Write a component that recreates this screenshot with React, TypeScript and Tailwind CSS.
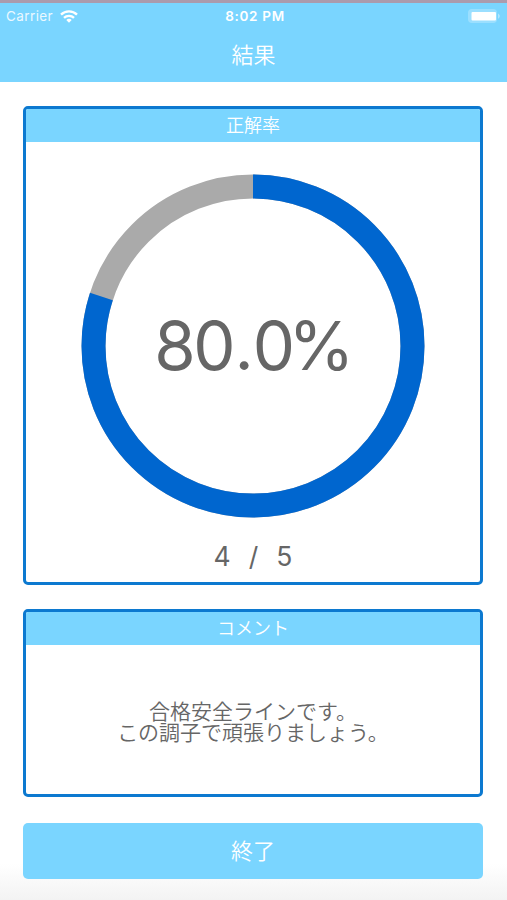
import type { ReactNode } from 'react';

const RADIUS = 159.5;
const CIRCUMFERENCE = 2 * Math.PI * RADIUS;

const result = {
    correct: 4,
    total: 5,
    comment: ['合格安全ラインです。', 'この調子で頑張りましょう。'],
};

export default function App() {
    const rate = result.correct / result.total;
    const [whole, fraction] = (rate * 100).toFixed(1).split('.');

    return (
        <div className="flex h-[900px] w-[507px] flex-col overflow-hidden bg-linear-to-b from-white from-[96%] to-[#f3f3f3] font-['Noto_Sans_CJK_JP',sans-serif] font-[350] text-[#666]">
            {/* Header */}
            <header className="h-[82px] shrink-0 border-t-[3px] border-[#ab9bad] bg-[#7ad5ff] text-white">
                <StatusBar />
                <h1 className="mt-2 text-center text-[22px] leading-8 font-[350]">結果</h1>
            </header>

            <main className="flex flex-col pt-6 pr-6 pl-[23px]">
                <Panel title="正解率" className="h-[479px]">
                    <div className="relative mt-8 flex h-[344px] w-[344px] items-center justify-center">
                        <RateRing rate={rate} />
                        <p className="relative pb-0.5 font-[Inter,sans-serif] text-[67px] leading-none font-normal tracking-[-2.6px]">
                            {whole}
                            <span className="px-[1.6px]">.</span>
                            {fraction}
                            <span className="-ml-1">%</span>
                        </p>
                    </div>
                    <p className="mt-5 flex gap-[18px] font-[Inter,sans-serif] text-[26.5px] leading-9 font-normal">
                        <span>{result.correct}</span>
                        <span>/</span>
                        <span>{result.total}</span>
                    </p>
                </Panel>

                <Panel title="コメント" className="mt-6 h-[188px]">
                    <p className="flex flex-1 flex-col justify-center pt-[3px] text-center text-[21px] leading-[21px]">
                        <span>
                            {result.comment[0]}
                            <br />
                            {result.comment[1]}
                        </span>
                    </p>
                </Panel>

                <button className="mt-[26px] h-14 rounded-[5px] bg-[#7ad5ff] pb-[3px] text-[22px] text-white">終了</button>
            </main>
        </div>
    );
}

function StatusBar() {
    return (
        <div className="grid h-[26px] grid-cols-3 items-center px-1.5 font-[Inter,sans-serif] text-[13px]">
            <div className="flex items-center gap-[7px]">
                <span className="text-[13.5px] font-normal tracking-[0.4px] opacity-85">Carrier</span>
                <svg width="18" height="13" viewBox="0 0 18 13" fill="none" stroke="white" strokeWidth="2.4">
                    <path d="M1 4.6C5.4.3 12.6.3 17 4.6" />
                    <path d="M4 7.9c2.8-2.7 7.2-2.7 10 0" />
                    <path d="M6.3 9.9c1.6-1.4 3.8-1.4 5.4 0L9 12.7z" fill="white" stroke="none" />
                </svg>
            </div>
            <span className="pt-px pl-[3px] text-center text-[13.5px] font-semibold tracking-[0.7px]">8:02 PM</span>
            <svg className="justify-self-end" width="34" height="16" viewBox="0 0 34 16">
                <rect x="1" y="1" width="29" height="14" rx="4" fill="white" opacity="0.25" />
                <rect x="4.5" y="4" width="24.5" height="8.5" rx="1" fill="white" />
                <path d="M31 5.5c2.4 1.2 2.4 4 0 5.2z" fill="white" opacity="0.4" />
            </svg>
        </div>
    );
}

function Panel({ title, className, children }: { title: string; className: string; children: ReactNode }) {
    return (
        <section className={`flex flex-col items-center overflow-hidden rounded-[5px] border-[3px] border-[#0c79d0] ${className}`}>
            <h2 className="h-[33px] w-full shrink-0 bg-[#7ad5ff] text-center text-[18px] leading-[31px] font-[350] text-white">{title}</h2>
            {children}
        </section>
    );
}

function RateRing({ rate }: { rate: number }) {
    return (
        <svg className="absolute inset-0 -rotate-90" width="344" height="344" viewBox="0 0 344 344" fill="none" strokeWidth="24">
            <circle cx="172" cy="172" r={RADIUS} stroke="#aaa" />
            <circle cx="172" cy="172" r={RADIUS} stroke="#0066cf" strokeDasharray={`${CIRCUMFERENCE * rate} ${CIRCUMFERENCE}`} />
        </svg>
    );
}
